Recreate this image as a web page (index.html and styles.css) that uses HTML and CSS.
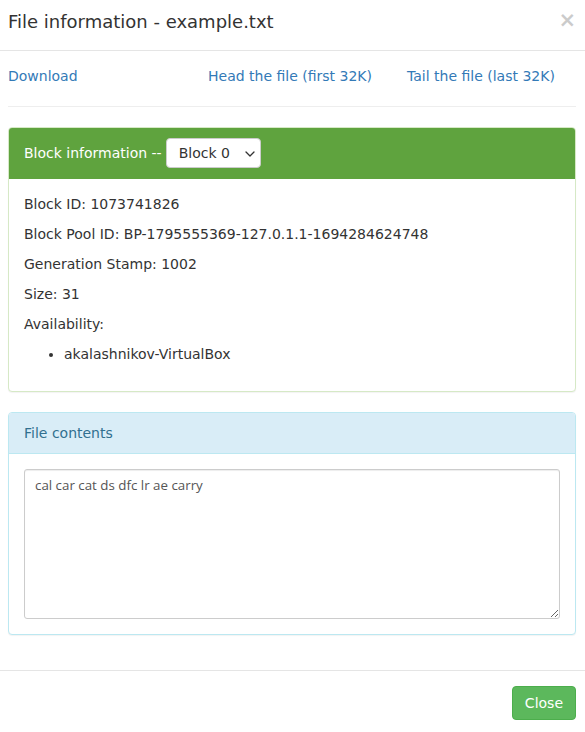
FILE: index.html
```html
<!DOCTYPE html>
<html lang="en">
<head>
<meta charset="utf-8">
<title>File information - example.txt</title>
<link rel="stylesheet" href="styles.css">
</head>
<body>
<div class="modal">
  <div class="modal-header">
    <h4 class="modal-title">File information - example.txt</h4>
    <button type="button" class="close" aria-label="Close">&times;</button>
  </div>
  <div class="modal-body">
    <div class="links">
      <a href="#">Download</a>
      <a href="#">Head the file (first 32K)</a>
      <a href="#">Tail the file (last 32K)</a>
    </div>
    <hr class="divider">
    <div class="panel panel-success">
      <div class="panel-heading">
        <span>Block information --</span>
        <span class="select-wrap">
          <select class="block-select">
            <option>Block 0</option>
          </select>
          <svg class="select-caret" width="10" height="6" viewBox="0 0 10 6" aria-hidden="true">
            <path d="M1 1 L5 5 L9 1" fill="none" stroke="#333" stroke-width="1.3" stroke-linecap="round" stroke-linejoin="round"/>
          </svg>
        </span>
      </div>
      <div class="panel-body">
        <p>Block ID: 1073741826</p>
        <p>Block Pool ID: BP-1795555369-127.0.1.1-1694284624748</p>
        <p>Generation Stamp: 1002</p>
        <p>Size: 31</p>
        <p>Availability:</p>
        <ul class="hosts">
          <li>akalashnikov-VirtualBox</li>
        </ul>
      </div>
    </div>
    <div class="panel panel-info">
      <div class="panel-heading">File contents</div>
      <div class="panel-body">
        <textarea class="file-contents" readonly>cal car cat ds dfc lr ae carry</textarea>
      </div>
    </div>
  </div>
  <div class="modal-footer">
    <button type="button" class="btn-success">Close</button>
  </div>
</div>
</body>
</html>
```

FILE: styles.css
```css
* {
  box-sizing: border-box;
}

html, body {
  margin: 0;
  background: #fff;
}

body {
  font-family: "DejaVu Sans", sans-serif;
  font-size: 14px;
  line-height: 20px;
  color: #333;
}

.modal {
  width: 585px;
}

.modal-header {
  display: flex;
  align-items: flex-start;
  justify-content: space-between;
  padding: 9px 9px 15px 8px;
  border-bottom: 1px solid #e5e5e5;
}

.modal-title {
  margin: 0;
  font-size: 18px;
  font-weight: 500;
  line-height: 25.7px;
  color: #333;
}

.close {
  margin-top: 1px;
  padding: 0;
  border: 0;
  background: transparent;
  font-family: "DejaVu Sans", sans-serif;
  font-size: 21px;
  font-weight: bold;
  line-height: 1;
  color: #000;
  opacity: 0.2;
  text-shadow: 0 1px 0 #fff;
  cursor: pointer;
}

.modal-body {
  padding: 15px 9px 15px 8px;
}

.links {
  display: grid;
  grid-template-columns: 200px 199px 1fr;
}

.links a {
  color: #337ab7;
  text-decoration: none;
}

.divider {
  margin: 20px 0;
  border: 0;
  border-top: 1px solid #eee;
}

.panel {
  margin-bottom: 20px;
  border: 1px solid transparent;
  border-radius: 4px;
  background: #fff;
  box-shadow: 0 1px 1px rgba(0, 0, 0, 0.05);
}

.panel-heading {
  padding: 10px 15px;
  border-bottom: 1px solid transparent;
  border-top-left-radius: 3px;
  border-top-right-radius: 3px;
}

.panel-body {
  padding: 15px;
}

.panel-success {
  border-color: #d6e9c6;
}

.panel-success > .panel-heading {
  display: flex;
  align-items: center;
  color: #fff;
  background-color: #5fa33e;
  border-color: #5fa33e;
}

.select-wrap {
  position: relative;
  display: inline-flex;
  margin-left: 4px;
}

.block-select {
  appearance: none;
  -webkit-appearance: none;
  width: 95px;
  height: 30px;
  padding: 0 20px 0 12px;
  border: 1px solid #ccc;
  border-radius: 4px;
  background: #fff;
  font-family: "DejaVu Sans", sans-serif;
  font-size: 14px;
  color: #333;
}

.select-caret {
  position: absolute;
  right: 6px;
  top: 13px;
  pointer-events: none;
}

.panel-body p {
  margin: 0 0 10px;
}

.hosts {
  margin: 1px 0 12px;
  padding-left: 40px;
}

.panel-info {
  border-color: #bce8f1;
}

.panel-info > .panel-heading {
  color: #31708f;
  background-color: #d9edf7;
  border-color: #bce8f1;
}

.file-contents {
  display: block;
  width: 100%;
  height: 150px;
  padding: 6px 10px;
  border: 1px solid #ccc;
  border-radius: 3px;
  box-shadow: inset 0 1px 1px rgba(0, 0, 0, 0.075);
  font-family: "Open Sans", sans-serif;
  font-size: 13.333px;
  color: #555;
  resize: both;
}

.modal-footer {
  display: flex;
  justify-content: flex-end;
  padding: 15px 9px 15px 8px;
  border-top: 1px solid #e5e5e5;
}

.btn-success {
  padding: 6px 12px;
  border: 1px solid #4cae4c;
  border-radius: 4px;
  background-color: #5cb85c;
  color: #fff;
  font-family: "DejaVu Sans", sans-serif;
  font-size: 14px;
  line-height: 20px;
  cursor: pointer;
}
```
